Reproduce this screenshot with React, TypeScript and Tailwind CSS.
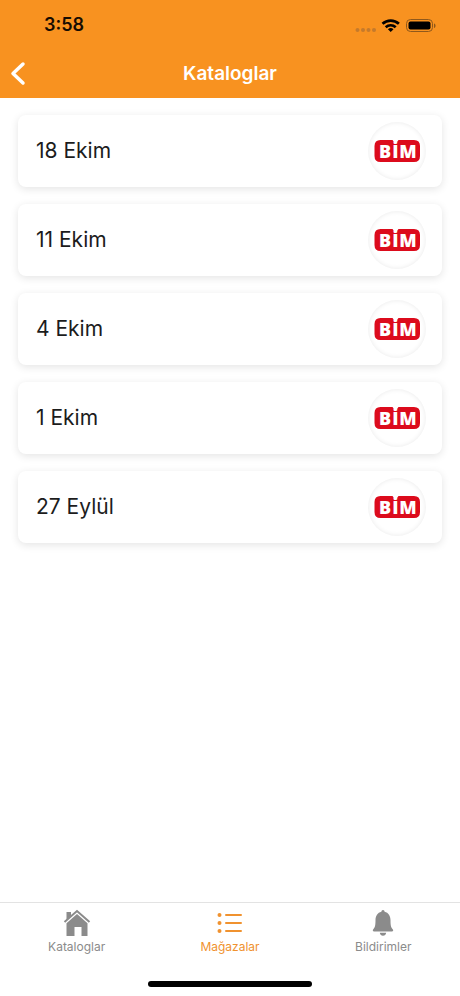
const catalogs = ["18 Ekim", "11 Ekim", "4 Ekim", "1 Ekim", "27 Eylül"];

function StatusIcons() {
  return (
    <svg width="84" height="20" viewBox="0 0 84 20" aria-hidden="true">
      <g fill="#c57a2b">
        <circle cx="3.500" cy="15" r="2" />
        <circle cx="9" cy="15" r="2" />
        <circle cx="14.500" cy="15" r="2" />
        <circle cx="20" cy="15" r="2" />
      </g>
      <g fill="none" stroke="#000" strokeWidth="2.700">
        <path d="M28.500 8.800a12 12 0 0 1 16.400 0" />
        <path d="M31.700 12.200a7.400 7.400 0 0 1 10 0" />
      </g>
      <path d="M33.900 14.300a4.200 4.200 0 0 1 5.600 0L36.700 17z" fill="#000" />
      <rect x="52.500" y="4.500" width="26" height="12" rx="4" fill="none" stroke="#8f581b" />
      <rect x="54.500" y="6.500" width="22" height="8" rx="2" fill="#000" />
      <path d="M80 8.500c2 .6 2 3.900 0 4.500z" fill="#8f581b" />
    </svg>
  );
}

function BimLogo() {
  return (
    <svg width="46" height="24" viewBox="0 0 46 24" role="img" aria-label="BİM">
      <path
        d="M6.500 1H18.500L20 3H23L24.500 1H40Q46 1 46 7V17Q46 23 40 23H6.500Q.5 23 .5 17V7Q.5 1 6.500 1Z"
        fill="#dc0b1c"
      />
      <g fill="#fff" fontFamily="'Open Sans', sans-serif" fontWeight="800" fontSize="18" textAnchor="middle">
        <text x="11" y="19">B</text>
        <text x="21.500" y="19">İ</text>
        <text x="34" y="19">M</text>
      </g>
    </svg>
  );
}

function HomeIcon() {
  return (
    <svg width="28" height="28" viewBox="0 0 28 28" fill="#8b8b8b" aria-hidden="true">
      <path d="M3.500 3H8V7L3.500 11Z" />
      <path d="M1.500 13 14 2 26.500 13" fill="none" stroke="#8b8b8b" strokeWidth="2" />
      <path d="M14 5 24.500 14.200V27H18.500V18H11.500V27H3.500V14.200Z" />
    </svg>
  );
}

function ListIcon() {
  return (
    <svg width="28" height="28" viewBox="0 0 28 28" fill="#f0922f" aria-hidden="true">
      <circle cx="3.500" cy="6" r="2" />
      <circle cx="3.500" cy="14" r="2" />
      <circle cx="3.500" cy="22" r="2" />
      <path d="M10 6H25M10 14H25M10 22H25" stroke="#f0922f" strokeWidth="2" strokeLinecap="round" />
    </svg>
  );
}

function BellIcon() {
  return (
    <svg width="28" height="28" viewBox="0 0 28 28" fill="#8b8b8b" aria-hidden="true">
      <path d="M14 1c-1 0-1.500.8-1.600 1.700C8.500 3.500 6.500 7 6.500 11c0 5.500-.5 7.500-2.200 9.200C3.300 21.200 3.900 22.500 5 22.500H23c1.100 0 1.700-1.300.7-2.300C22 18.500 21.500 16.500 21.500 11c0-4-2-7.500-5.900-8.300C15.500 1.800 15 1 14 1Z" />
      <path d="M10.800 23.800h6.400c-.3 1.900-1.500 3-3.200 3s-2.900-1.100-3.200-3Z" />
    </svg>
  );
}

const tabs = [
  { label: "Kataloglar", icon: HomeIcon, active: false },
  { label: "Mağazalar", icon: ListIcon, active: true },
  { label: "Bildirimler", icon: BellIcon, active: false },
];

export default function App() {
  return (
    <div className="flex min-h-screen flex-col bg-white font-['Inter',sans-serif]">
      <header className="bg-[#f89220]">
        <div className="flex h-[50px] items-center justify-between pr-[22px] pl-11">
          <span className="text-lg font-semibold text-[#160c02]">3:58</span>
          <StatusIcons />
        </div>
        <div className="grid h-12 grid-cols-[40px_1fr_40px] items-center">
          <button type="button" aria-label="Geri" className="flex h-full items-center pl-2">
            <svg width="20" height="28" viewBox="0 0 20 28" fill="none" stroke="#fff" strokeWidth="3.500" strokeLinecap="round" strokeLinejoin="round" aria-hidden="true">
              <path d="M15 4 5 13.500 15 23" />
            </svg>
          </button>
          <h1 className="text-center text-[19px] font-semibold text-white">Kataloglar</h1>
        </div>
      </header>

      <main className="grow px-[18px] pt-[17px]">
        <ul className="flex flex-col gap-[17px]">
          {catalogs.map((name) => (
            <li key={name}>
              <button
                type="button"
                className="flex h-[72px] w-full items-center justify-between rounded-lg bg-white pr-4 pl-[18px] shadow-[0_2px_8px_rgba(0,0,0,0.11)]"
              >
                <span className="text-[21px] text-[#1c1c1c]">{name}</span>
                <span className="flex size-[58px] items-center justify-center rounded-full bg-white shadow-[inset_0_0_5px_rgba(0,0,0,0.09)]">
                  <BimLogo />
                </span>
              </button>
            </li>
          ))}
        </ul>
      </main>

      <footer className="border-t border-[#e3e3e3]">
        <nav className="grid h-[78px] grid-cols-3 items-start pt-[6px]">
          {tabs.map(({ label, icon: Icon, active }) => (
            <a
              key={label}
              href="#"
              aria-current={active ? "page" : undefined}
              className={`flex flex-col items-center gap-[2px] text-xs ${active ? "text-[#f0922f]" : "text-[#8b8b8b]"}`}
            >
              <Icon />
              {label}
            </a>
          ))}
        </nav>
        <div className="mx-auto mb-[9px] h-[6px] w-[164px] rounded-full bg-black" />
      </footer>
    </div>
  );
}
